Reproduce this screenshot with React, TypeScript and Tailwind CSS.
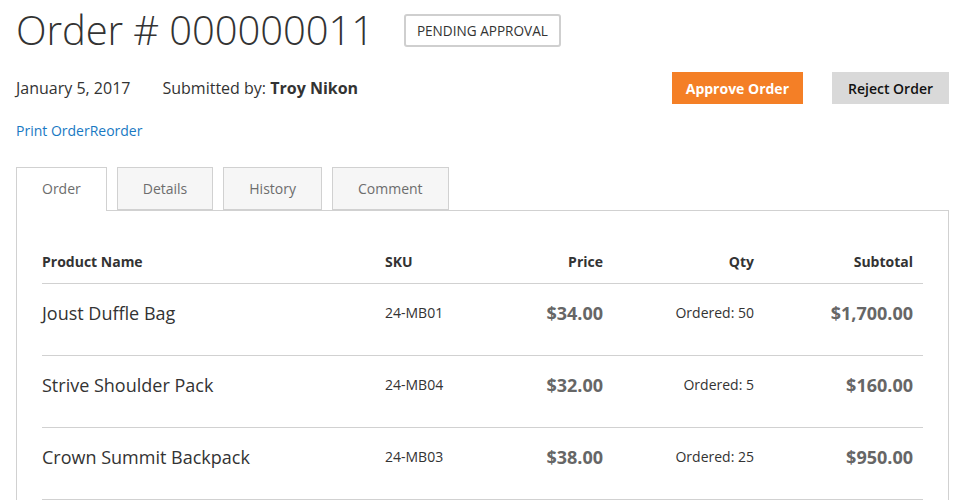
const items = [
  { name: 'Joust Duffle Bag', sku: '24-MB01', price: '$34.00', qty: 50, subtotal: '$1,700.00' },
  { name: 'Strive Shoulder Pack', sku: '24-MB04', price: '$32.00', qty: 5, subtotal: '$160.00' },
  { name: 'Crown Summit Backpack', sku: '24-MB03', price: '$38.00', qty: 25, subtotal: '$950.00' },
]

const tabs = ['Order', 'Details', 'History', 'Comment']

const cols = 'grid grid-cols-[333px_120px_118px_151px_159px]'

export default function App() {
  return (
    <div className="min-h-[500px] bg-white px-4 text-[#333]" style={{ fontFamily: '"Open Sans", sans-serif' }}>
      {/* Title */}
      <div className="flex items-center gap-[30px] pt-[5px]">
        <h1 className="text-[40px] font-light leading-[50px] tracking-[-0.1px]">Order # 000000011</h1>
        <span className="mt-[1px] rounded-[3px] border-2 border-[#cfcfcf] px-[11px] py-[5px] text-[13.6px] leading-[19px] uppercase">
          Pending Approval
        </span>
      </div>

      {/* Meta + actions */}
      <div className="mt-[17px] flex items-center justify-between">
        <div className="flex gap-8 text-[16px] leading-[22px]">
          <span>January 5, 2017</span>
          <span>
            Submitted by: <strong className="font-bold">Troy Nikon</strong>
          </span>
        </div>
        <div className="mr-[-4px] flex gap-[29px] text-[14px]">
          <button className="h-8 bg-[#f47f26] px-[14px] font-bold text-white">Approve Order</button>
          <button className="h-8 bg-[#d9d9d9] px-[16px] font-semibold text-[#111]">Reject Order</button>
        </div>
      </div>

      {/* Links */}
      <div className="mt-[17px] flex text-[14px] leading-5 text-[#1979c3]">
        <a href="#">Print Order</a>
        <a href="#">Reorder</a>
      </div>

      {/* Tabs */}
      <div className="mt-[26px] mr-[-4px]">
        <div className="relative z-10 flex gap-[10px]">
          {tabs.map((t, i) => (
            <div
              key={t}
              className={
                i === 0
                  ? 'mb-[-1px] h-[44px] border border-b-0 border-[#d1d1d1] bg-white px-[25px] pt-[11px] text-[14px] leading-5 text-[#6d6d6d]'
                  : 'h-[43px] border border-[#d1d1d1] bg-[#f6f6f6] px-[25px] pt-[11px] text-[14px] leading-5 text-[#6d6d6d]'
              }
            >
              {t}
            </div>
          ))}
        </div>

        <div className="border border-[#d1d1d1] px-[25px] pt-[30px]">
          <div className={`${cols} border-b border-[#d1d1d1] pt-[11px] pb-[11px] text-[14px] leading-5 font-bold`}>
            <div>Product Name</div>
            <div className="px-[10px]">SKU</div>
            <div className="px-[10px] text-right">Price</div>
            <div className="px-[10px] text-right">Qty</div>
            <div className="px-[10px] text-right">Subtotal</div>
          </div>
          {items.map((it) => (
            <div key={it.sku} className={`${cols} h-[72px] items-start border-b border-[#d1d1d1] pt-[19px]`}>
              <div className="text-[18px] leading-5">{it.name}</div>
              <div className="px-[10px] text-[14px] leading-5">{it.sku}</div>
              <div className="px-[10px] text-right text-[18px] leading-5 font-bold text-[#666]">{it.price}</div>
              <div className="px-[10px] text-right text-[14px] leading-5">Ordered: {it.qty}</div>
              <div className="px-[10px] text-right text-[18px] leading-5 font-bold text-[#666]">{it.subtotal}</div>
            </div>
          ))}
        </div>
      </div>
    </div>
  )
}
